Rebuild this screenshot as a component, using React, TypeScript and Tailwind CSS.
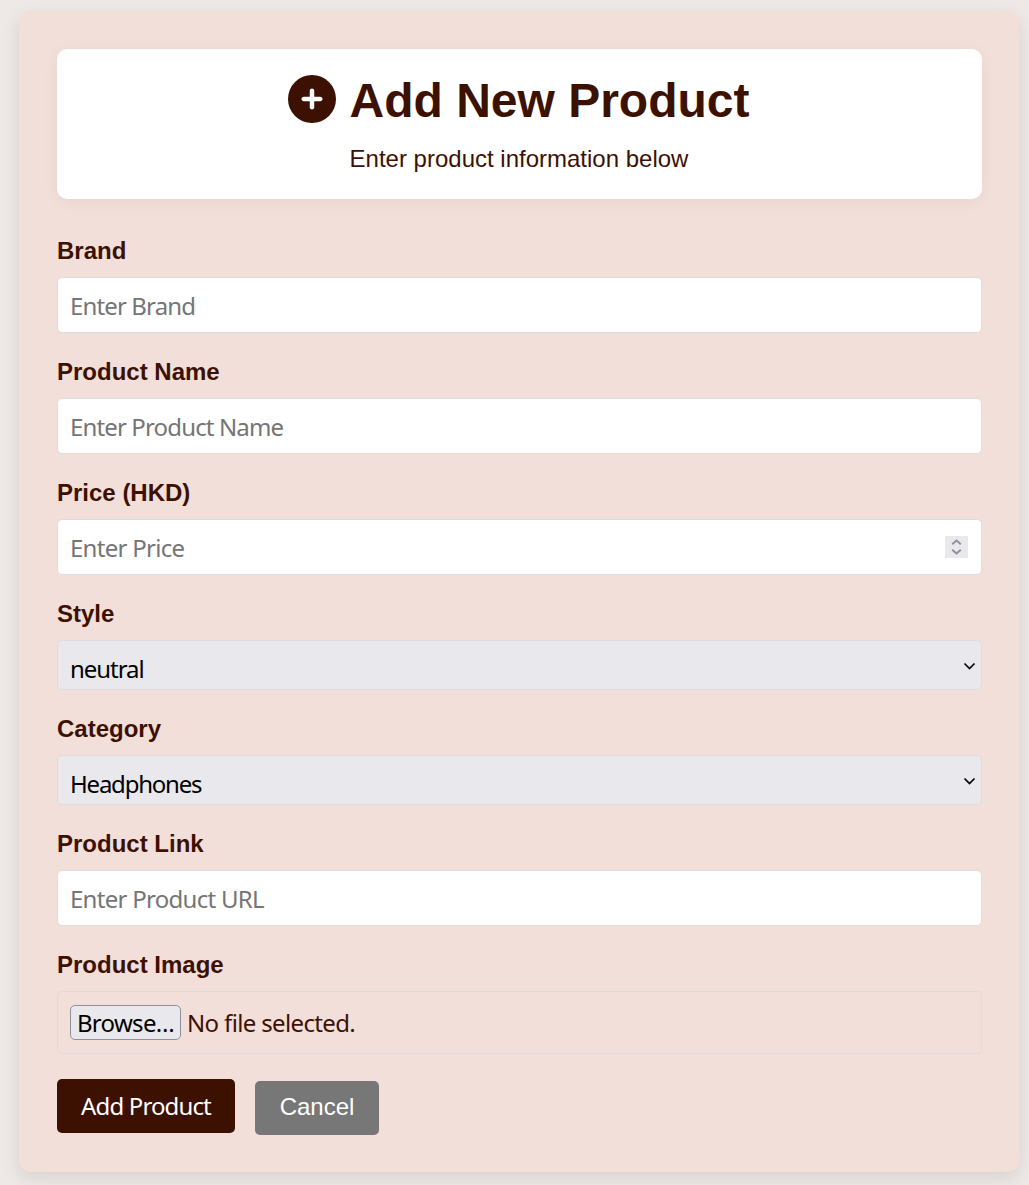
import type { ReactNode } from 'react';
import { FaCirclePlus } from 'react-icons/fa6';

const fieldBox =
  'block w-full rounded-[5px] border border-[#dddddd] px-3 text-2xl font-["Noto_Sans",sans-serif]';

function Field({ label, children }: { label: string; children: ReactNode }) {
  return (
    <div className="flex flex-col gap-3">
      <label className="text-2xl leading-7 font-bold">{label}</label>
      {children}
    </div>
  );
}

function TextInput({ placeholder, tracking }: { placeholder: string; tracking: string }) {
  return (
    <input
      placeholder={placeholder}
      className={`${fieldBox} ${tracking} h-14 bg-white placeholder:text-[#757575] outline-none`}
    />
  );
}

function Select({ value, tracking }: { value: string; tracking: string }) {
  return (
    <div className={`${fieldBox} flex! h-[50px] items-center justify-between bg-[#e9e9ed] pr-[5px]! text-black`}>
      <span className={`${tracking} pt-2`}>{value}</span>
      <svg width="13" height="10" viewBox="0 0 13 10" fill="none" stroke="#000" strokeWidth="1.7" className="mt-px">
        <path d="M1.5 2.5 6.5 7.5 11.5 2.5" />
      </svg>
    </div>
  );
}

export default function App() {
  return (
    <div className='h-[1185px] overflow-hidden bg-[#eee9e6] pt-[11px] pl-[19px] font-["Liberation_Sans",sans-serif] text-[#3d1101]'>
      <main className="h-[1161px] w-[1000px] rounded-[12px] bg-[#f2dfd9] px-[38px] pt-[38px] shadow-[0_6px_18px_rgba(0,0,0,0.1)]">
        <header className="flex h-[150px] w-[925px] flex-col items-center rounded-[10px] bg-white pt-[22px] shadow-[0_3px_15px_rgba(0,0,0,0.05)]">
          <h1 className="flex items-start gap-[13px] pr-px text-5xl leading-[56px] font-bold">
            <FaCirclePlus className="mt-1 size-12" />
            <span className="pt-0.5">Add New Product</span>
          </h1>
          <p className="mt-4 pr-px text-2xl leading-7">Enter product information below</p>
        </header>

        <form className="mt-[38px] flex w-[925px] flex-col">
          <div className="flex flex-col gap-[25px]">
            <Field label="Brand">
              <TextInput placeholder="Enter Brand" tracking="tracking-[-0.86px]" />
            </Field>
            <Field label="Product Name">
              <TextInput placeholder="Enter Product Name" tracking="tracking-[-0.86px]" />
            </Field>
            <Field label="Price (HKD)">
              <div className="relative">
                <TextInput placeholder="Enter Price" tracking="tracking-[-0.72px]" />
                <div className="absolute top-[17px] right-3.5 flex h-[22px] w-[23px] items-center justify-center bg-[#e9e9ed]">
                  <svg width="11" height="16" viewBox="0 0 11 16" fill="none" stroke="#8f8f9d" strokeWidth="1.9">
                    <path d="M1.2 5.3 5.5 1.5 9.8 5.3M1.2 10.7 5.5 14.5 9.8 10.7" />
                  </svg>
                </div>
              </div>
            </Field>
            <Field label="Style">
              <Select value="neutral" tracking="tracking-[-1.05px]" />
            </Field>
            <Field label="Category">
              <Select value="Headphones" tracking="tracking-[-1.22px]" />
            </Field>
            <Field label="Product Link">
              <TextInput placeholder="Enter Product URL" tracking="tracking-[-0.72px]" />
            </Field>
            <Field label="Product Image">
              <div className={`${fieldBox} flex! h-[63px] items-center gap-1.5`}>
                <button
                  type="button"
                  className="flex h-[35px] w-[111px] items-center justify-center rounded-[5px] border border-[#8f8f9d] bg-[#e9e9ed] tracking-[-0.7px] whitespace-nowrap text-black"
                >
                  Browse…
                </button>
                <span className="tracking-[-0.65px]">No file selected.</span>
              </div>
            </Field>
          </div>

          <div className="mt-[25px] flex items-start gap-5 text-2xl text-white">
            <button
              type="button"
              className='h-[54px] w-[178px] rounded-[5px] bg-[#3d1101] font-["Noto_Sans",sans-serif] tracking-[-0.87px] whitespace-nowrap'
            >
              Add Product
            </button>
            <button type="button" className="mt-0.5 h-[54px] w-[124px] rounded-[5px] bg-[#777777] pb-0.5">
              Cancel
            </button>
          </div>
        </form>
      </main>
    </div>
  );
}
